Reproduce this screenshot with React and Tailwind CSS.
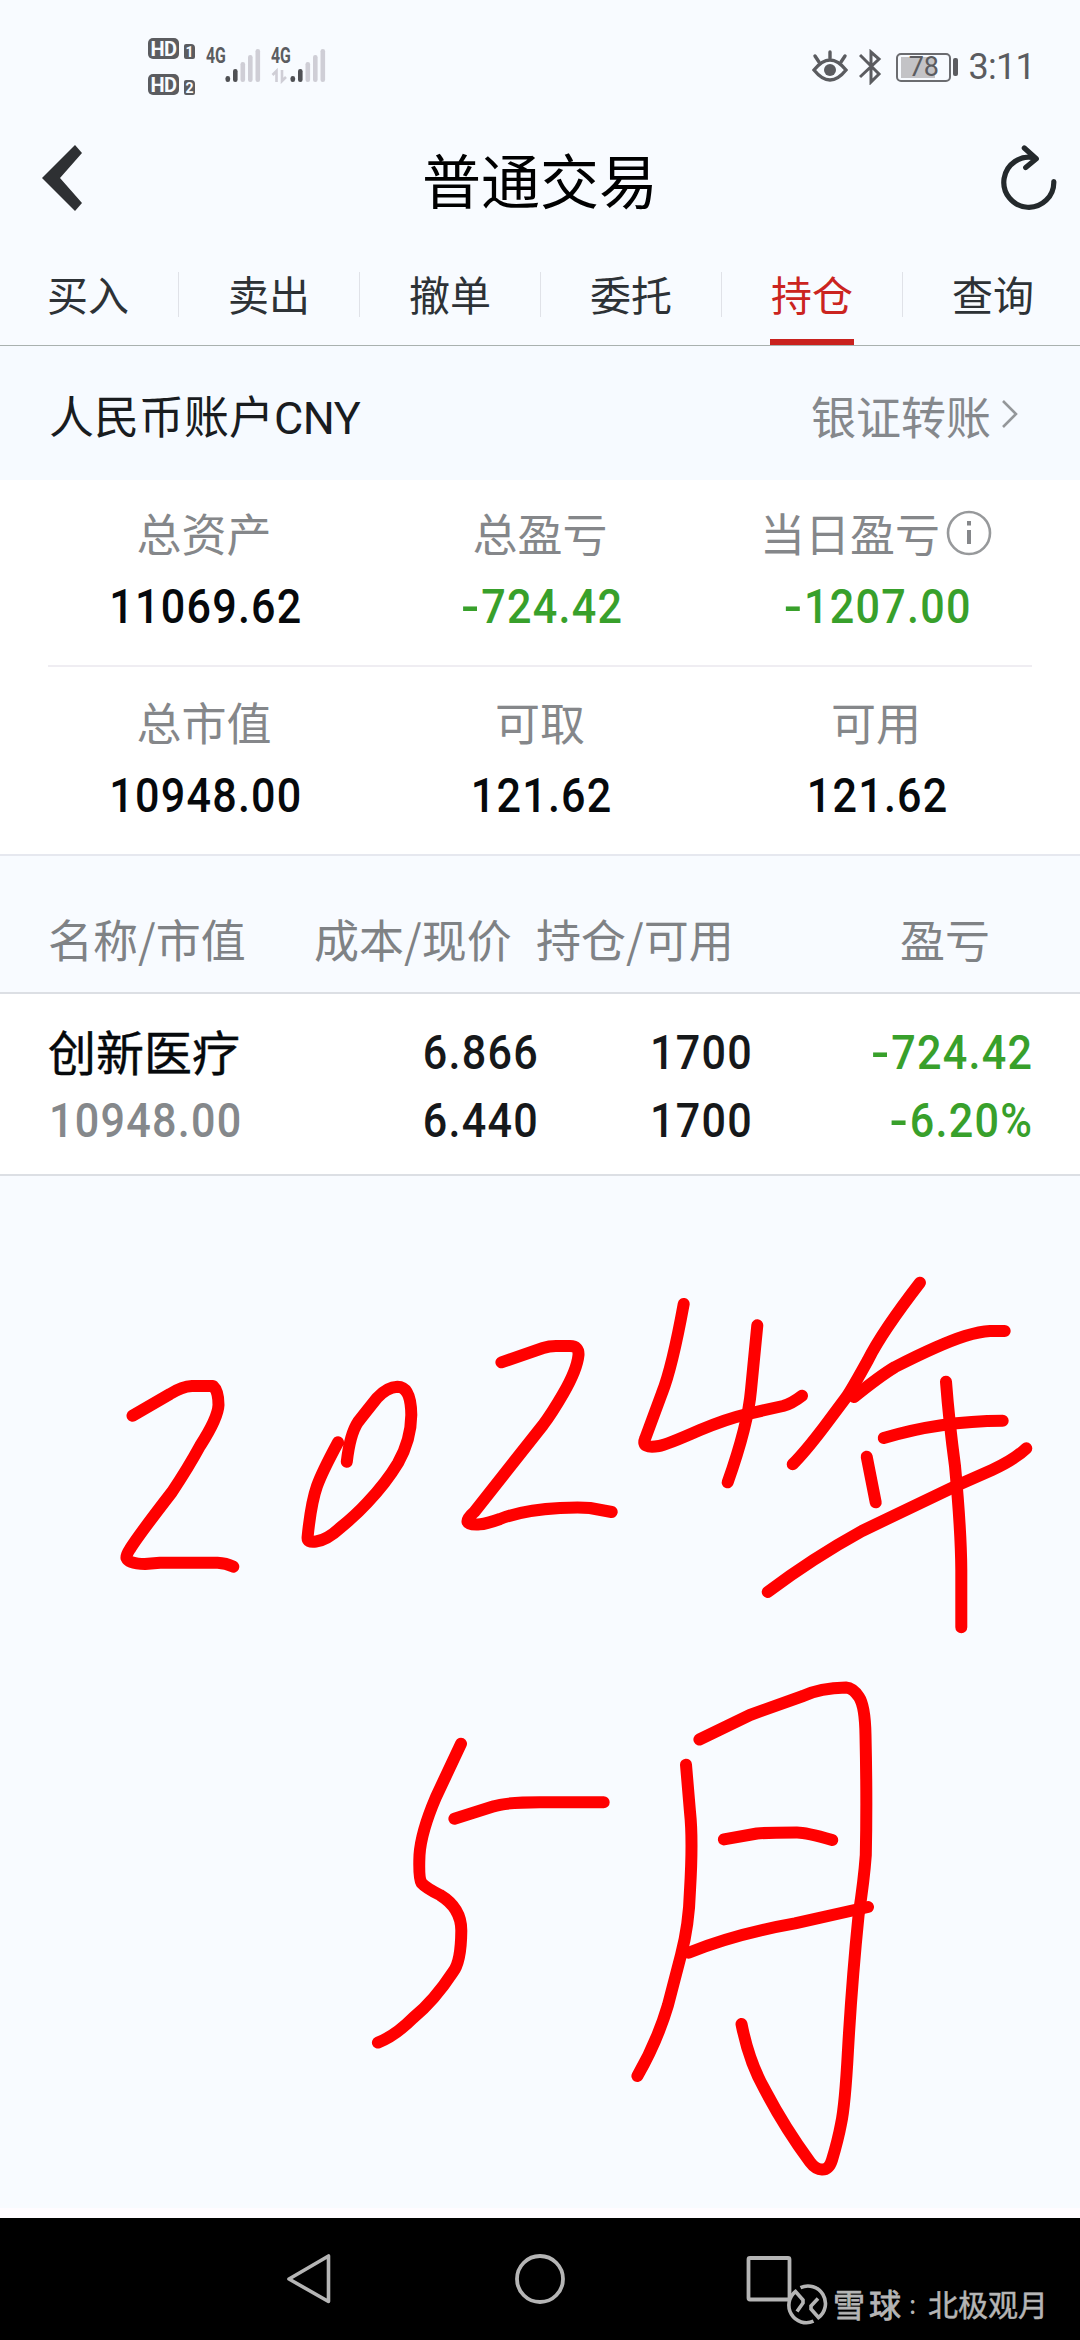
import clsx from 'clsx'

const TABS = ['买入', '卖出', '撤单', '委托', '持仓', '查询']
const ACTIVE_TAB = '持仓'

const SUMMARY = [
  [
    { label: '总资产', value: '11069.62' },
    { label: '总盈亏', value: '-724.42', down: true },
    { label: '当日盈亏', value: '-1207.00', down: true, info: true },
  ],
  [
    { label: '总市值', value: '10948.00' },
    { label: '可取', value: '121.62' },
    { label: '可用', value: '121.62' },
  ],
]

// Freehand strokes, in page pixels
const INK = [
  'M132.500 1415.700L170 1394Q182 1386.500 192 1386H213Q218.500 1391 218.500 1405Q218 1418 200 1446Q188 1468 172 1492Q138 1536 130 1549Q126 1555 126.500 1558Q129 1564 145 1564L160 1562.700H217.500Q226 1563 233.300 1566.700',
  'M338 1442.300Q322 1472 317 1486Q311 1503 307.600 1537Q307 1543 316 1541.500Q327 1540 340 1528Q356 1515 367 1503Q386 1483 398 1463Q411 1440 411.300 1415Q411 1386.700 397.400 1386.700Q387 1387 377 1398Q365 1413 358 1422Q350 1434 346.800 1461.700',
  'M501.400 1362.300L543 1348Q549 1346 556 1346H570Q579 1346 578.500 1355Q577 1370 563 1394Q552 1413 543 1425L474.500 1511.700Q458 1526 480 1524.300Q486 1524 500 1519Q523 1510 560 1508Q580 1507 590 1508L611.700 1512',
  'M683.700 1304Q672 1368 662 1393L645 1439Q641 1449 659 1446Q666 1445 700 1430Q726 1419 746 1414.300L783 1406Q792 1403.500 802 1395.700',
  'M757.300 1325.300L751 1390Q748 1425 727.700 1482.300',
  'M920 1282.700Q882 1332 868 1360Q852 1389 846.700 1396.700L824 1427Q805 1452 792.700 1464.300',
  'M854 1397Q880 1376 895 1367Q940 1344 965 1336Q980 1331.500 990 1331H1004.700',
  'M883.700 1438Q940 1421 1002.700 1420.700',
  'M866.700 1456.700L875.700 1502.300',
  'M767.700 1592Q813 1558 862 1531L958 1485L992 1470Q1014 1460 1026.300 1448.300',
  'M946 1381.700Q949 1421 955 1466Q961 1530 961.300 1570V1627.300',
  'M461 1743.700L436 1797Q421 1832 419.500 1855Q418.500 1878 421.500 1883Q426 1888 440 1895Q461.500 1908 461.300 1931Q461 1962 453 1972Q434 2001 413 2018Q395 2036 377.900 2042.600',
  'M454.400 1818.700L493 1806.500Q505 1802.300 540 1802.200H603.700',
  'M686 1764.700L690 1812Q693 1840 690 1890Q689 1925 681 1955L668 2005Q657 2042 637.400 2076',
  'M699.400 1739.500Q725 1727 750 1715L803 1696Q820 1688 846 1687.500Q853 1688 859 1697Q865 1706 865.500 1735Q867 1800 865.800 1855Q864 1880 858.600 1915Q852 1980 848 2050Q845 2106 841 2124Q838 2140 832 2160Q829 2169.500 822.500 2169.500Q816 2170 810 2162Q785 2128 765 2090Q749 2062 741.500 2024',
  'M723.900 1839.400L757 1833.500Q767 1832.500 797 1832.500Q806 1832.500 832.200 1840',
  'M688.600 1952.700Q735 1934 795 1923.400L868 1907',
]

function Num({ children, className }) {
  const negative = children.startsWith('-')
  return (
    <span className={clsx('inline-block font-[Roboto,sans-serif] text-[49px] leading-[60px] font-medium tracking-[1.4px] scale-x-[.88]', className)}>
      {negative && <span className="mr-[3px] inline-block w-[20px] origin-left scale-x-[1.25]">-</span>}
      {negative ? children.slice(1) : children}
    </span>
  )
}

function HdBadge({ n }) {
  return (
    <div className="flex items-end gap-[5px]">
      <span className="flex h-[21px] w-[31px] items-center justify-center rounded-[5px] bg-[#5b5c60] font-[Roboto,sans-serif] text-[20px] leading-none font-bold tracking-[-0.5px] text-[#f8fbff]">
        HD
      </span>
      <span className="flex h-[15px] w-[11px] items-center justify-center rounded-[2px] rounded-tr-[4px] bg-[#5b5c60] font-[Roboto,sans-serif] text-[14px] leading-none font-bold text-[#f8fbff]">
        {n}
      </span>
    </div>
  )
}

function Signal({ data }) {
  const bars = [76, 69, 62, 55, 49]
  return (
    <div className="flex w-[65px] items-start">
      <span className="w-[19px] origin-left scale-x-[.72] font-[Roboto,sans-serif] text-[22px] leading-[20px] font-bold text-[#5b5c60]">4G</span>
      <svg className="-ml-[19px] h-[38px] w-[56px]" viewBox="206 46 56 38">
        {bars.map((y, i) => (
          <rect key={y} x={225.5 + i * 7.5} y={y} width="4.6" height={82 - y} rx="2.2" fill={i < 2 ? '#4f5054' : '#cfced6'} />
        ))}
        {data && <path d="M207.500 75l4-4v11M217 70v11l4-4" fill="none" stroke="#cfced6" strokeWidth="2.600" />}
      </svg>
    </div>
  )
}

function StatusBar() {
  return (
    <div className="flex h-[110px] items-start justify-between pt-[38px] pr-[45px] pl-[148px] text-[#5b5c60]">
      <div className="flex">
        <div className="flex w-[58px] flex-col gap-[15px]">
          <HdBadge n="1" />
          <HdBadge n="2" />
        </div>
        <div className="flex pt-[8px]">
          <Signal />
          <Signal data />
        </div>
      </div>
      <div className="flex items-center pt-[11px]">
        <svg className="h-[36px] w-[38px]" viewBox="809 49 38 36" fill="none" stroke="#5b5c60" strokeWidth="3.400" strokeLinecap="round">
          <path d="M812 70Q828 50 844 70Q828 90 812 70Z" />
          <path d="M828 58v-6M817 62l-4-6M839 62l4-6" />
          <circle cx="828" cy="70" r="6" fill="#5b5c60" stroke="none" />
        </svg>
        <svg className="ml-[10px] h-[36px] w-[23px]" viewBox="857 49 23 36" fill="none" stroke="#5b5c60" strokeWidth="3">
          <path d="M858 55l19 19-8 8V52l8 7-19 18" />
        </svg>
        <span className="ml-[14px] flex h-[29px] w-[55px] items-center rounded-[5px] border-2 border-[#6b6c70] bg-[linear-gradient(90deg,transparent_3px,#c3c3c6_3px,#c3c3c6_37px,transparent_37px)] bg-clip-content py-[2px]">
          <span className="w-full text-center font-[Roboto,sans-serif] text-[27px] leading-[22px]">78</span>
        </span>
        <span className="ml-[2px] h-[18px] w-[5px] rounded-[2px] bg-[#5b5c60]" />
        <span className="ml-[10px] font-[Roboto,sans-serif] text-[36px] leading-[36px] tracking-[-0.7px]">3:11</span>
      </div>
    </div>
  )
}

function TitleBar() {
  return (
    <div className="flex h-[142px] items-center justify-between pr-[22px] pb-[6px] pl-[40px]">
      <svg className="h-[70px] w-[44px]" viewBox="40 143 44 70">
        <path d="M75 145l7 8-22 25 22 25-7 8-33-33z" fill="#2e3033" />
      </svg>
      <h1 className="-ml-[2px] text-[59px] leading-none text-black">普通交易</h1>
      <svg className="h-[70px] w-[60px]" viewBox="998 144 60 70" fill="none" stroke="#24292c" strokeWidth="5.200" strokeLinecap="round" strokeLinejoin="round">
        <path d="M1053.800 182.500a25 25 0 1 1-19-23.500M1024.300 149l12 10.800-10.600 8.700" />
      </svg>
    </div>
  )
}

function Tabs() {
  return (
    <div className="flex h-[94px] border-b border-[#a9b1af]">
      <div className="-mx-[3px] flex flex-1">
        {TABS.map((tab, i) => (
          <div key={tab} className="flex w-[181px] shrink-0">
            <div className={clsx('mt-[20px] h-[45px] w-px', i > 0 && 'bg-[#e0e2e8]')} />
            <div className="flex flex-1 flex-col items-center justify-between">
              <span className={clsx('mt-[18px] text-[41px] leading-[46px]', tab === ACTIVE_TAB ? 'text-[#cb2420]' : 'text-[#2d3236]')}>{tab}</span>
              {tab === ACTIVE_TAB && <span className="h-[6px] w-[84px] bg-[#c9211e]" />}
            </div>
          </div>
        ))}
      </div>
    </div>
  )
}

function SummaryItem({ item }) {
  return (
    <div className="flex flex-col items-center">
      <div className="flex h-[50px] items-center text-[45px] leading-[50px] text-[#85878a]">
        {item.label}
        {item.info && (
          <svg className="ml-[6px] h-[46px] w-[46px]" viewBox="0 0 46 46">
            <circle cx="23" cy="23" r="21" fill="none" stroke="#97999b" strokeWidth="2.600" />
            <path d="M23 11v4.500M23 20v14" stroke="#85878a" strokeWidth="4" />
          </svg>
        )}
      </div>
      <Num className={clsx('mt-[19px] ml-[4px]', item.down ? 'text-[#38a02b]' : 'text-[#06090c]')}>{item.value}</Num>
    </div>
  )
}

function Summary() {
  return (
    <div className="border-b-2 border-[#e6e8ef] bg-white px-[36px]">
      <div className="grid h-[185px] grid-cols-3 pt-[28px]">
        {SUMMARY[0].map(item => <SummaryItem key={item.label} item={item} />)}
      </div>
      <div className="mx-[12px] h-[2px] bg-[#efedf2]" />
      <div className="grid h-[187px] grid-cols-3 pt-[30px]">
        {SUMMARY[1].map(item => <SummaryItem key={item.label} item={item} />)}
      </div>
    </div>
  )
}

function Holdings() {
  return (
    <>
      <div className="flex h-[138px] items-center border-b-2 border-[#dcdfe4] pt-[30px] text-[45px] leading-[50px] whitespace-nowrap text-[#7f8285]">
        <span className="ml-[48px] w-[266px]">名称/市值</span>
        <span className="w-[222px]">成本/现价</span>
        <span className="w-[364px]">持仓/可用</span>
        <span>盈亏</span>
      </div>
      <div className="flex h-[182px] border-b-2 border-[#dcdfe4] bg-white px-[48px] pt-[29px]">
        <div className="flex w-[290px] flex-col items-start">
          <span className="-mt-[3px] h-[71px] text-[48px] leading-[60px] text-[#06090c] [-webkit-text-stroke:0.4px]">创新医疗</span>
          <Num className="ml-[1px] origin-left text-[#85888b]">10948.00</Num>
        </div>
        <div className="flex w-[201px] flex-col items-end gap-[8px] text-[#16181a]">
          <Num className="origin-right">6.866</Num>
          <Num className="origin-right">6.440</Num>
        </div>
        <div className="flex w-[214px] flex-col items-end gap-[8px] text-[#16181a]">
          <Num className="origin-right">1700</Num>
          <Num className="origin-right">1700</Num>
        </div>
        <div className="-mr-[1px] flex flex-1 flex-col items-end gap-[8px] text-[#38a02b]">
          <Num className="origin-right">-724.42</Num>
          <Num className="origin-right">-6.20%</Num>
        </div>
      </div>
    </>
  )
}

function NavBar() {
  return (
    <div className="relative flex h-[122px] items-start bg-black pt-[34px] pl-[284px]">
      <svg className="h-[54px] w-[50px]" viewBox="284 2252 50 54" fill="none" stroke="#b5b5b5" strokeWidth="3.600" strokeLinejoin="round">
        <path d="M328.500 2256v45.500L289 2279z" />
      </svg>
      <svg className="ml-[179px] h-[54px] w-[54px]" viewBox="513 2252 54 54">
        <circle cx="540" cy="2279" r="23" fill="none" stroke="#b5b5b5" strokeWidth="3.800" />
      </svg>
      <svg className="ml-[177px] h-[54px] w-[54px]" viewBox="744 2252 54 54">
        <rect x="748.500" y="2258" width="41" height="41.500" rx="1.500" fill="none" stroke="#b5b5b5" strokeWidth="3.800" />
      </svg>
      {/* watermark */}
      <div className="absolute top-[66px] left-[786px] flex items-center whitespace-nowrap text-[#b5b5b5]">
        <svg className="h-[42px] w-[42px]" viewBox="0 0 42 42" fill="none" stroke="#b5b5b5" strokeWidth="3.600">
          <path d="M14.500 3.700A17.500 17.500 0 0 1 32.500 33.500L25 25V22L32 14.500" />
          <path d="M27.500 37.200A17.500 17.500 0 0 1 9.500 7.500L17 16V19L11 27.500" />
        </svg>
        <span className="-mt-[4px] ml-[5px] text-[32px] leading-[40px] tracking-[4px] [-webkit-text-stroke:0.8px]">雪球</span>
        <span className="-mt-[4px] w-[23px] pl-[4px] text-[26px] leading-[40px]">:</span>
        <span className="-mt-[4px] text-[30px] leading-[40px] [-webkit-text-stroke:0.5px]">北极观月</span>
      </div>
    </div>
  )
}

export default function App() {
  return (
    <div className="relative flex h-[2340px] w-[1080px] flex-col overflow-hidden bg-[#f8fbff] font-['Noto_Sans_CJK_SC',sans-serif]">
      <StatusBar />
      <TitleBar />
      <Tabs />
      <div className="flex h-[134px] items-center justify-between bg-[#f6faff] pt-[8px] pr-[61px] pl-[49px] text-[45px] leading-[50px]">
        <span className="text-[#191c1f]">
          人民币账户<span className="font-[Roboto,sans-serif] tracking-[-0.5px]">CNY</span>
        </span>
        <span className="-mt-[3px] flex items-center text-[#85888c]">
          银证转账
          <svg className="ml-[10px] h-[32px] w-[18px]" viewBox="0 0 18 32" fill="none" stroke="#94979a" strokeWidth="2.600">
            <path d="M2 1l13 13L2 27" />
          </svg>
        </span>
      </div>
      <Summary />
      <Holdings />
      <div className="flex-1" />
      <div className="h-[10px] bg-[#fffcff]" />
      <NavBar />
      <svg className="pointer-events-none absolute inset-0 h-full w-full" viewBox="0 0 1080 2340" fill="none" stroke="#ff0000" strokeWidth="12" strokeLinecap="round" strokeLinejoin="round">
        {INK.map(d => (
          <path key={d} d={d} />
        ))}
      </svg>
    </div>
  )
}
